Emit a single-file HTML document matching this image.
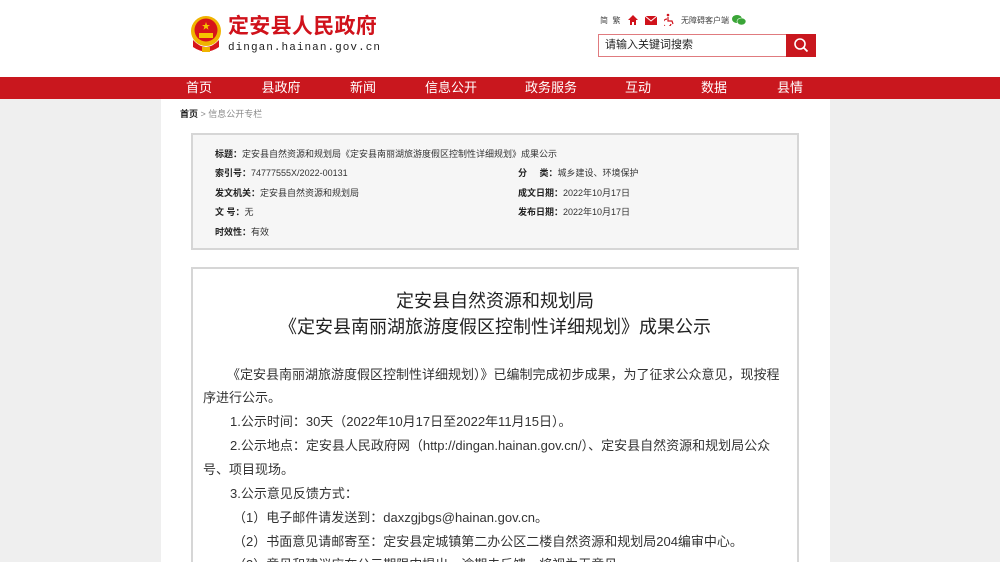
<!DOCTYPE html>
<html><head><meta charset="utf-8"><style>
*{margin:0;padding:0;box-sizing:border-box}
html,body{width:1000px;height:562px;overflow:hidden}
body{background:#efefef;font-family:"Liberation Sans","Noto Sans CJK SC",sans-serif;color:#333;position:relative}
.abs{position:absolute}
#hdr{left:0;top:0;width:1000px;height:77px;background:#fff}
#nav{left:0;top:77px;width:1000px;height:22px;background:#c9171e}
#nav span{position:absolute;top:3px;color:#fff;font-size:13px;line-height:16px;transform:translateX(-50%);white-space:nowrap}
#col{left:161px;top:99px;width:669px;height:463px;background:#fff}
#info{left:191px;top:133px;width:608px;height:117px;background:#f6f6f6;border:2px solid #d6d6d6}
#info div{position:absolute;font-size:9px;line-height:11px;color:#333;white-space:nowrap}
#info b{color:#222}
#main{left:191px;top:267px;width:608px;height:295px;border:2px solid #d6d6d6;border-bottom:none;background:#fff;overflow:hidden}
.t{position:absolute;left:0;width:604px;text-align:center;font-size:18px;color:#222;line-height:22px}
.p{position:absolute;left:10px;font-size:13px;color:#333;white-space:nowrap;line-height:16px}
</style></head><body>
<div id="hdr" class="abs"></div>
<svg class="abs" style="left:189px;top:14px" width="34" height="40" viewBox="0 0 34 40">
<circle cx="17" cy="17" r="15" fill="#f0b400"/>
<circle cx="17" cy="16" r="11.5" fill="#d7141a"/>
<polygon points="17,8 18,11 21,11 18.6,12.8 19.5,15.8 17,14 14.5,15.8 15.4,12.8 13,11 16,11" fill="#f5c400"/>
<rect x="10" y="19" width="14" height="5" fill="#f5c400"/>
<path d="M4 26 Q17 40 30 26 L30 33 Q17 42 4 33Z" fill="#d7141a"/>
<rect x="13" y="33" width="8" height="5" fill="#f0b400"/>
</svg>
<div class="abs" style="left:228px;top:14px;font-size:21px;font-weight:bold;color:#d0121b;line-height:26px;letter-spacing:0.3px">定安县人民政府</div>
<div class="abs" style="left:228px;top:42px;font-size:11px;font-family:'Liberation Mono',monospace;color:#222;letter-spacing:1.05px;line-height:12px">dingan.hainan.gov.cn</div>
<div class="abs" style="left:600px;top:16px;font-size:8px;color:#444;line-height:10px">简&nbsp;&nbsp;繁</div>
<svg class="abs" style="left:627px;top:14px" width="12" height="12" viewBox="0 0 12 12"><path d="M6 1 L11 6 L9 6 L9 11 L7 11 L7 8 L5 8 L5 11 L3 11 L3 6 L1 6Z" fill="#d0121b"/></svg>
<svg class="abs" style="left:645px;top:16px" width="12" height="9" viewBox="0 0 12 9"><rect width="12" height="9" fill="#d0121b"/><path d="M0 0 L6 5 L12 0" stroke="#fff" fill="none"/></svg>
<svg class="abs" style="left:664px;top:13px" width="11" height="13" viewBox="0 0 11 13"><circle cx="4" cy="2" r="1.3" fill="#d0121b"/><path d="M4 4 V8 H8 L9 11 M3 6 A4 4 0 1 0 7 11" stroke="#d0121b" fill="none" stroke-width="1.2"/></svg>
<div class="abs" style="left:681px;top:16px;font-size:8px;color:#444;line-height:10px">无障碍客户端</div>
<svg class="abs" style="left:732px;top:14px" width="14" height="12" viewBox="0 0 14 12"><ellipse cx="5" cy="5" rx="5" ry="4" fill="#3aa537"/><ellipse cx="9.5" cy="7.5" rx="4.5" ry="3.5" fill="#3aa537" stroke="#fff" stroke-width=".6"/></svg>
<div class="abs" style="left:598px;top:34px;width:189px;height:23px;border:1px solid #e07b7f;background:#fff"></div>
<div class="abs" style="left:605px;top:39px;font-size:11px;color:#222;line-height:13px">请输入关键词搜索</div>
<div class="abs" style="left:786px;top:34px;width:30px;height:23px;background:#c9171e"></div>
<svg class="abs" style="left:793px;top:37px" width="16" height="16" viewBox="0 0 16 16"><circle cx="7" cy="7" r="5" stroke="#fff" stroke-width="1.6" fill="none"/><path d="M10.5 10.5 L14.5 14.5" stroke="#fff" stroke-width="1.8"/></svg>
<div id="nav" class="abs">
<span style="left:199px">首页</span><span style="left:281px">县政府</span><span style="left:363px">新闻</span><span style="left:451px">信息公开</span><span style="left:551px">政务服务</span><span style="left:638px">互动</span><span style="left:714px">数据</span><span style="left:790px">县情</span>
</div>
<div id="col" class="abs"></div>
<div class="abs" style="left:180px;top:109px;font-size:9px;line-height:11px;color:#888"><b style="color:#222">首页</b> &gt; 信息公开专栏</div>
<div id="info" class="abs">
<div style="left:22px;top:14px"><b>标题：</b>定安县自然资源和规划局《定安县南丽湖旅游度假区控制性详细规划》成果公示</div>
<div style="left:22px;top:33px"><b>索引号：</b>74777555X/2022-00131</div>
<div style="left:22px;top:53px"><b>发文机关：</b>定安县自然资源和规划局</div>
<div style="left:22px;top:72px"><b>文 号：</b>无</div>
<div style="left:22px;top:92px"><b>时效性：</b>有效</div>
<div style="left:325px;top:33px"><b>分&nbsp;&nbsp;&nbsp;&nbsp;&nbsp;类：</b>城乡建设、环境保护</div>
<div style="left:325px;top:53px"><b>成文日期：</b>2022年10月17日</div>
<div style="left:325px;top:72px"><b>发布日期：</b>2022年10月17日</div>
</div>
<div id="main" class="abs">
<div class="t" style="top:21px">定安县自然资源和规划局</div>
<div class="t" style="top:47px">《定安县南丽湖旅游度假区控制性详细规划》成果公示</div>
<div class="p" style="top:98px;left:34px">《定安县南丽湖旅游度假区控制性详细规划）》已编制完成初步成果，为了征求公众意见，现按程</div>
<div class="p" style="top:121px">序进行公示。</div>
<div class="p" style="top:145px;left:37px">1.公示时间：30天（2022年10月17日至2022年11月15日）。</div>
<div class="p" style="top:169px;left:37px">2.公示地点：定安县人民政府网（http://dingan.hainan.gov.cn/）、定安县自然资源和规划局公众</div>
<div class="p" style="top:193px">号、项目现场。</div>
<div class="p" style="top:217px;left:37px">3.公示意见反馈方式：</div>
<div class="p" style="top:241px;left:40px">（1）电子邮件请发送到：daxzgjbgs@hainan.gov.cn。</div>
<div class="p" style="top:265px;left:40px">（2）书面意见请邮寄至：定安县定城镇第二办公区二楼自然资源和规划局204编审中心。</div>
<div class="p" style="top:288px;left:40px">（3）意见和建议应在公示期限内提出，逾期未反馈，将视为无意见。</div>
</div>
</body></html>
